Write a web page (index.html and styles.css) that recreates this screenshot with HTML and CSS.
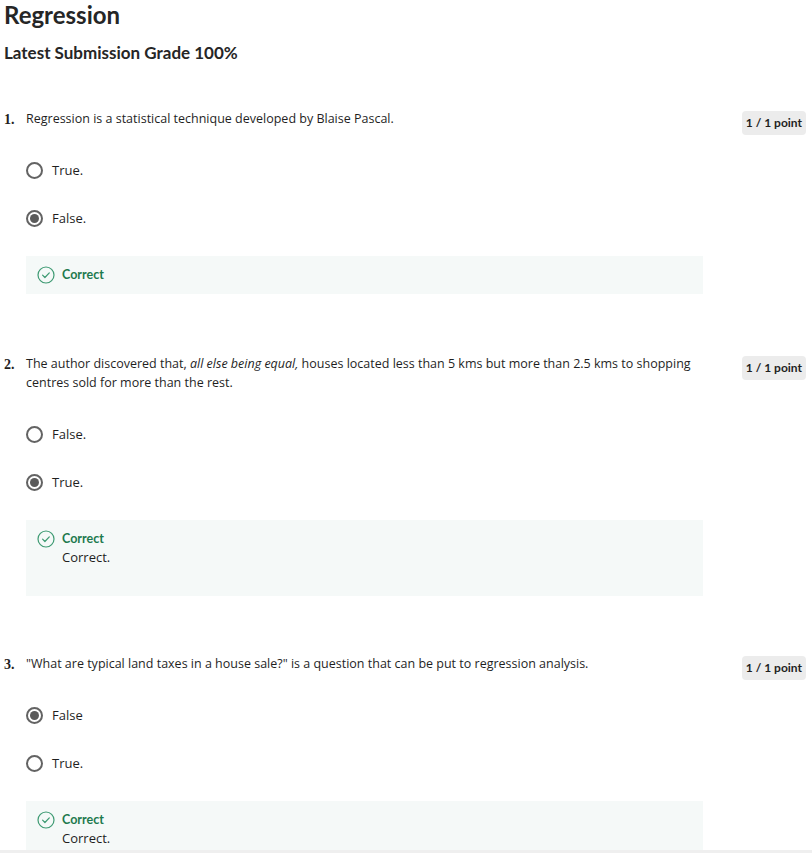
FILE: index.html
```html
<!DOCTYPE html>
<html lang="en">
<head>
<meta charset="utf-8">
<title>Regression</title>
<link rel="stylesheet" href="styles.css">
</head>
<body>
<main class="page">
  <h1 class="title">Regression</h1>
  <h2 class="grade">Latest Submission Grade 100%</h2>

  <section class="question q-first">
    <div class="num">1.</div>
    <div class="body">
      <p class="prompt">Regression is a statistical technique developed by Blaise Pascal.</p>
      <div class="options">
        <div class="option"><span class="radio"></span><span>True.</span></div>
        <div class="option"><span class="radio checked"></span><span>False.</span></div>
      </div>
      <div class="feedback">
        <div class="fb-row">
          <svg class="check" viewBox="0 0 18 18" width="18" height="18"><circle cx="9" cy="9" r="8" fill="none" stroke="#3d9a72" stroke-width="1.2"/><path d="M5.6 9.2l2.3 2.3 4.4-4.6" fill="none" stroke="#3d9a72" stroke-width="1.2" stroke-linecap="round" stroke-linejoin="round"/></svg>
          <div class="fb-text"><div class="fb-title">Correct</div></div>
        </div>
      </div>
    </div>
    <div class="points">1 / 1 point</div>
  </section>

  <section class="question">
    <div class="num">2.</div>
    <div class="body">
      <p class="prompt">The author discovered that, <em>all else being equal,</em>&nbsp;houses located less than 5 kms but more than 2.5 kms to shopping centres sold for more than the rest.</p>
      <div class="options">
        <div class="option"><span class="radio"></span><span>False.</span></div>
        <div class="option"><span class="radio checked"></span><span>True.</span></div>
      </div>
      <div class="feedback">
        <div class="fb-row">
          <svg class="check" viewBox="0 0 18 18" width="18" height="18"><circle cx="9" cy="9" r="8" fill="none" stroke="#3d9a72" stroke-width="1.2"/><path d="M5.6 9.2l2.3 2.3 4.4-4.6" fill="none" stroke="#3d9a72" stroke-width="1.2" stroke-linecap="round" stroke-linejoin="round"/></svg>
          <div class="fb-text"><div class="fb-title">Correct</div><p class="fb-expl">Correct.</p></div>
        </div>
      </div>
    </div>
    <div class="points">1 / 1 point</div>
  </section>

  <section class="question q-last">
    <div class="num">3.</div>
    <div class="body">
      <p class="prompt">"What are typical land taxes in a house sale?" is a question that can be put to regression analysis.</p>
      <div class="options">
        <div class="option"><span class="radio checked"></span><span>False</span></div>
        <div class="option"><span class="radio"></span><span>True.</span></div>
      </div>
      <div class="feedback">
        <div class="fb-row">
          <svg class="check" viewBox="0 0 18 18" width="18" height="18"><circle cx="9" cy="9" r="8" fill="none" stroke="#3d9a72" stroke-width="1.2"/><path d="M5.6 9.2l2.3 2.3 4.4-4.6" fill="none" stroke="#3d9a72" stroke-width="1.2" stroke-linecap="round" stroke-linejoin="round"/></svg>
          <div class="fb-text"><div class="fb-title">Correct</div><p class="fb-expl">Correct.</p></div>
        </div>
      </div>
    </div>
    <div class="points">1 / 1 point</div>
  </section>
</main>
<div class="bottom-bar"></div>
</body>
</html>
```
FILE: styles.css
```css
html, body {
  margin: 0;
  padding: 0;
  background: #ffffff;
}
body {
  font-family: "Open Sans", "Noto Sans", sans-serif;
  color: #1f1f1f;
  font-size: 12.5px;
}
.page {
  padding: 0 6px 0 4px;
}
.title {
  margin: 0;
  font-family: "Lato", "Open Sans", sans-serif;
  font-weight: 700;
  font-size: 24px;
  line-height: 30px;
  color: #262626;
}
.grade {
  margin: 13px 0 0;
  font-family: "Lato", "Open Sans", sans-serif;
  font-weight: 700;
  font-size: 17px;
  line-height: 20px;
  color: #262626;
}
.question {
  display: flex;
  align-items: flex-start;
  margin-top: 60px;
}
.q-first {
  margin-top: 46px;
}
.q-last {
  margin-top: 58px;
}
.num {
  width: 22px;
  flex: none;
  font-family: "Liberation Serif", "DejaVu Serif", serif;
  font-weight: 700;
  font-size: 14px;
  line-height: 19px;
  padding-top: 1px;
}
.body {
  width: 677px;
  flex: none;
}
.prompt {
  margin: 0;
  line-height: 19px;
}
.prompt em {
  font-style: italic;
}
.options {
  margin-top: 18px;
  display: flex;
  flex-direction: column;
}
.option {
  height: 48px;
  display: flex;
  align-items: center;
  gap: 9px;
  font-size: 13px;
}
.radio {
  box-sizing: border-box;
  width: 17px;
  height: 17px;
  border: 2px solid #636363;
  border-radius: 50%;
  display: flex;
  align-items: center;
  justify-content: center;
  flex: none;
}
.radio.checked::after {
  content: "";
  width: 9px;
  height: 9px;
  border-radius: 50%;
  background: #5b5b5b;
}
.feedback {
  margin-top: 14px;
  background: #f5f9f8;
  padding: 9px 11px 10px;
}
.fb-row {
  display: flex;
  align-items: flex-start;
  gap: 7px;
}
.check {
  flex: none;
  margin-top: 1px;
}
.fb-title {
  font-family: "Lato", "Open Sans", sans-serif;
  font-weight: 700;
  font-size: 12.5px;
  line-height: 19px;
  color: #1d7a4e;
}
.fb-expl {
  margin: 0 0 19px;
  line-height: 19px;
  font-size: 13px;
}
.points {
  margin-left: auto;
  margin-top: 2px;
  background: #ececec;
  border-radius: 4px;
  padding: 0 4px;
  height: 24px;
  line-height: 24px;
  font-family: "Lato", "Open Sans", sans-serif;
  font-weight: 700;
  font-size: 12px;
  white-space: nowrap;
}
.bottom-bar {
  position: fixed;
  left: 0;
  right: 0;
  bottom: 0;
  height: 3px;
  background: #efefef;
}
```
